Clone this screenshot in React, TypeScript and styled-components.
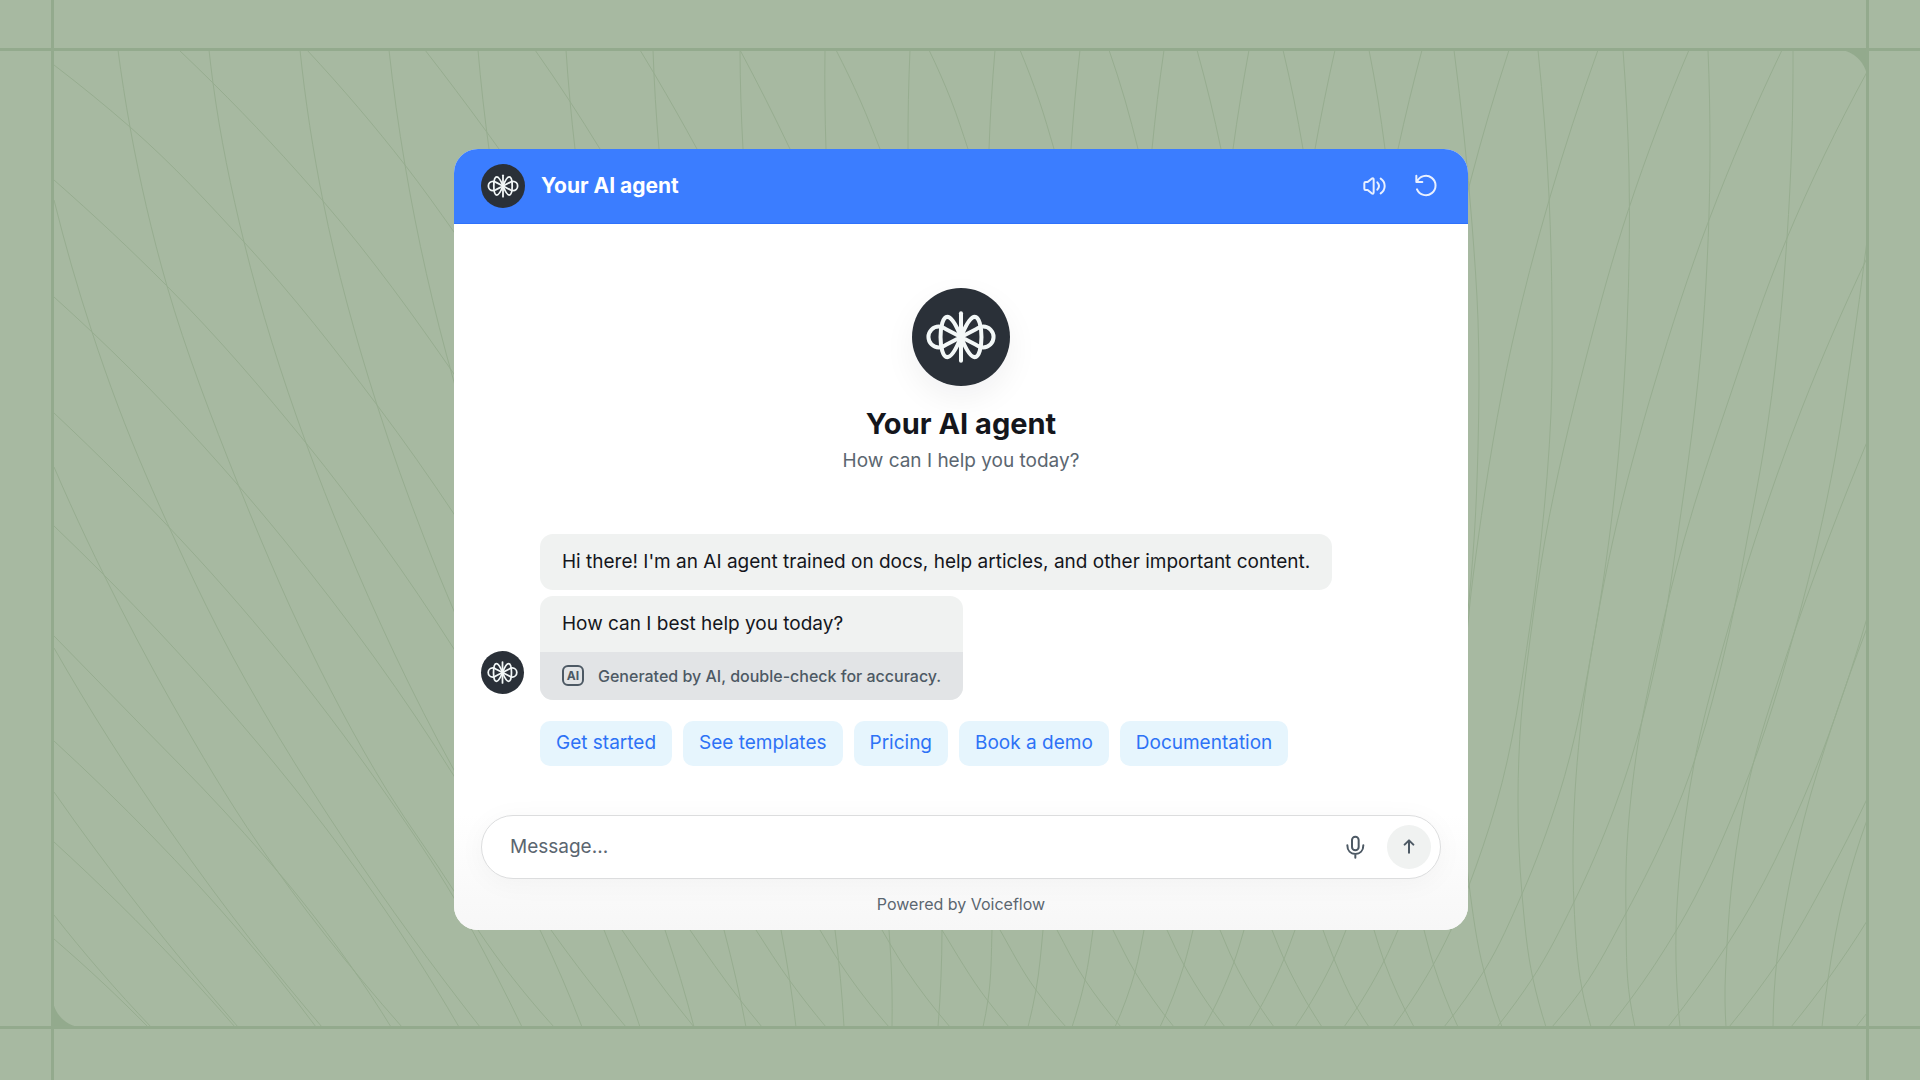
import React, { useState } from "react";
import styled, { createGlobalStyle, css } from "styled-components";

const color = {
  page: "#a7b9a1",
  guide: "#93aa8d",
  curve: "#97ad90",
  blue: "#3b7dff",
  blueEdge: "#2f72fb",
  link: "#2d72f6",
  chip: "#e6f5fd",
  ink: "#14161c",
  muted: "#5b6670",
  slate: "#4d5964",
  bubble: "#f0f2f1",
  notice: "#e2e4e6",
  dark: "#2a3038",
};

type Point = [number, number];

/* Each curve is a list of points ordered from top to bottom. */
const sweepingCurves: Point[][] = [
  [[54, 939], [103, 983], [148, 1027]],
  [[54, 842], [180, 966], [235, 1027]],
  [[54, 741], [239, 931], [316, 1027]],
  [[54, 636], [135, 719], [224, 811], [302, 901], [391, 1027]],
  [[54, 526], [104, 575], [218, 697], [359, 873], [459, 1027]],
  [[54, 413], [181, 540], [388, 797], [454, 898], [472, 930], [522, 1027]],
  [[54, 297], [92, 332], [237, 484], [284, 540], [454, 776], [540, 930], [582, 1027]],
  [[54, 180], [167, 286], [306, 443], [380, 540], [454, 649], [604, 930], [640, 1027]],
  [[54, 65], [130, 127], [244, 242], [377, 405], [454, 514], [665, 930], [694, 1027]],
  [[179, 50], [213, 83], [323, 201], [454, 374], [724, 930], [746, 1027]],
  [[307, 50], [405, 165], [454, 232], [781, 930], [796, 1027]],
  [[425, 50], [486, 131], [499, 149], [835, 930], [844, 1027]],
  [[535, 50], [569, 100], [600, 149], [889, 930], [892, 990], [892, 1027]],
  [[640, 50], [655, 75], [697, 149], [942, 930], [938, 1027]],
  [[740, 50], [766, 100], [790, 149], [992, 930], [988, 1000], [983, 1027]],
  [[836, 50], [860, 100], [880, 149], [1043, 930], [1036, 990], [1028, 1027]],
  [[929, 50], [951, 100], [968, 149], [1093, 930], [1085, 980], [1072, 1027]],
  [[1020, 50], [1039, 100], [1054, 149], [1144, 930], [1135, 972], [1115, 1027]],
  [[1109, 50], [1125, 100], [1138, 149], [1193, 930], [1184, 965], [1160, 1027]],
  [[1197, 50], [1210, 100], [1221, 149], [1244, 930], [1234, 962], [1204, 1027]],
  [[1283, 50], [1294, 100], [1303, 149], [1295, 930], [1284, 959], [1249, 1027]],
  [[1369, 50], [1378, 100], [1385, 149], [1346, 930], [1334, 959], [1295, 1027]],
  [[1454, 50], [1472, 224], [1478, 320], [1478, 448], [1474, 540], [1467, 619], [1398, 930], [1384, 961], [1344, 1027]],
  [[1538, 50], [1549, 196], [1552, 310], [1551, 413], [1541, 540], [1530, 626], [1496, 805], [1468, 888], [1451, 930], [1393, 1027]],
  [[1623, 50], [1629, 172], [1627, 327], [1609, 540], [1596, 626], [1558, 798], [1522, 894], [1484, 971], [1444, 1027]],
  [[1708, 50], [1710, 148], [1703, 327], [1677, 540], [1664, 623], [1614, 809], [1573, 904], [1532, 979], [1497, 1027]],
  [[1793, 50], [1787, 238], [1764, 448], [1747, 540], [1729, 633], [1674, 815], [1625, 915], [1582, 989], [1552, 1027]],
  [[1867, 241], [1851, 358], [1835, 458], [1818, 540], [1798, 619], [1741, 795], [1676, 931], [1630, 1000], [1609, 1027]],
  [[1867, 618], [1843, 694], [1812, 778], [1727, 945], [1668, 1027]],
  [[1867, 799], [1827, 878], [1780, 959], [1729, 1027]],
  [[1867, 921], [1828, 979], [1791, 1027]],
  [[1867, 1013], [1856, 1027]],
];

const steepCurves: Point[][] = [
  [[54, 915], [101, 972], [151, 1027]],
  [[54, 792], [143, 912], [238, 1027]],
  [[54, 648], [171, 832], [253, 943], [322, 1027]],
  [[54, 467], [87, 540], [104, 575], [173, 705], [259, 845], [402, 1027]],
  [[54, 200], [92, 332], [118, 406], [175, 540], [218, 629], [347, 844], [480, 1027]],
  [[118, 50], [130, 127], [167, 286], [238, 484], [261, 540], [300, 628], [388, 792], [454, 891], [478, 930], [554, 1027]],
  [[209, 50], [213, 83], [244, 242], [306, 443], [344, 540], [454, 770], [551, 930], [626, 1027]],
  [[300, 50], [323, 201], [377, 405], [425, 540], [454, 611], [622, 930], [640, 956], [694, 1027]],
  [[389, 50], [405, 165], [454, 382], [690, 930], [741, 1001], [762, 1027]],
  [[478, 50], [489, 149], [756, 930], [790, 981], [826, 1027]],
  [[566, 50], [575, 149], [820, 930], [840, 963], [889, 1027]],
  [[653, 50], [659, 149], [882, 930], [905, 968], [950, 1027]],
  [[740, 50], [743, 149], [942, 930], [988, 1001], [1009, 1027]],
  [[825, 50], [826, 149], [1000, 930], [1036, 990], [1066, 1027]],
  [[910, 50], [908, 149], [1057, 930], [1085, 980], [1121, 1027]],
  [[995, 50], [989, 149], [1113, 930], [1135, 972], [1174, 1027]],
  [[1080, 50], [1071, 149], [1167, 930], [1184, 965], [1225, 1027]],
  [[1164, 50], [1152, 149], [1220, 930], [1234, 962], [1274, 1027]],
  [[1249, 50], [1233, 149], [1272, 930], [1284, 959], [1322, 1027]],
  [[1335, 50], [1315, 149], [1323, 930], [1334, 959], [1357, 1008], [1369, 1027]],
  [[1422, 50], [1398, 149], [1374, 930], [1384, 961], [1414, 1027]],
  [[1509, 50], [1471, 179], [1424, 930], [1434, 966], [1458, 1027]],
  [[1598, 50], [1550, 197], [1512, 344], [1478, 540], [1469, 612], [1469, 884], [1484, 971], [1502, 1027]],
  [[1689, 50], [1629, 208], [1586, 358], [1545, 540], [1530, 640], [1521, 720], [1518, 798], [1522, 894], [1533, 979], [1546, 1027]],
  [[1782, 50], [1709, 220], [1655, 382], [1613, 540], [1596, 626], [1580, 733], [1573, 850], [1574, 904], [1582, 989], [1591, 1027]],
  [[1867, 72], [1787, 238], [1729, 399], [1684, 540], [1659, 640], [1636, 757], [1626, 871], [1626, 915], [1630, 1000], [1635, 1027]],
  [[1867, 258], [1802, 408], [1755, 540], [1723, 647], [1694, 764], [1680, 867], [1676, 931], [1677, 988], [1680, 1027]],
  [[1867, 442], [1828, 540], [1786, 657], [1749, 781], [1733, 874], [1727, 945], [1725, 1001], [1726, 1027]],
  [[1867, 628], [1833, 723], [1804, 819], [1786, 902], [1777, 959], [1773, 1027]],
  [[1867, 820], [1845, 891], [1828, 979], [1822, 1027]],
];

/* Smooth path through the points, treating x as a function of y. */
function toPath(points: Point[]): string {
  const secant = (i: number) =>
    (points[i + 1][0] - points[i][0]) / (points[i + 1][1] - points[i][1]);
  const last = points.length - 1;
  if (last === 1) return `M${points[0]} L${points[1]}`;
  const slopes = points.map((_, i) => {
    if (i === 0 || i === last) return 0;
    const before = points[i][1] - points[i - 1][1];
    const after = points[i + 1][1] - points[i][1];
    return (secant(i - 1) * after + secant(i) * before) / (before + after);
  });
  slopes[0] = 2 * secant(0) - slopes[1];
  slopes[last] = 2 * secant(last - 1) - slopes[last - 1];
  let path = `M${points[0]}`;
  for (let i = 0; i < last; i++) {
    const [x0, y0] = points[i];
    const [x1, y1] = points[i + 1];
    const third = (y1 - y0) / 3;
    path += ` C${x0 + slopes[i] * third},${y0 + third} ${x1 - slopes[i + 1] * third},${y1 - third} ${x1},${y1}`;
  }
  return path;
}

const GlobalStyle = createGlobalStyle`
  *, *::before, *::after { box-sizing: border-box; }
  body {
    margin: 0;
    background: ${color.page};
    color: ${color.ink};
    font-family: Inter, "Liberation Sans", sans-serif;
    font-size: 19px;
    line-height: 24px;
  }
  button, input { font: inherit; color: inherit; }
  h1, h2, p, ul { margin: 0; padding: 0; }
`;

const Page = styled.div`
  position: relative;
  display: flex;
  align-items: center;
  justify-content: center;
  min-height: 100vh;
  padding: 64px 64px 66px 66px;
  overflow: hidden;
`;

const Backdrop = styled.div`
  position: absolute;
  inset: 0;
`;

const Curves = styled.svg`
  display: block;
  width: 100%;
  height: 100%;
  fill: none;
  stroke: ${color.curve};
  stroke-width: 1;

  path { vector-effect: non-scaling-stroke; }
`;

const Guide = styled.div<{ $edge: "top" | "bottom" | "left" | "right" }>`
  position: absolute;
  background: ${color.guide};
  ${({ $edge }) =>
    $edge === "top" || $edge === "bottom"
      ? css`left: 0; right: 0; height: 3px;`
      : css`top: 0; bottom: 0; width: 3px;`}
  ${({ $edge }) => $edge}: ${({ $edge }) =>
    ({ top: 48, bottom: 51, left: 51, right: 51 })[$edge]}px;
`;

const Corner = styled.div<{ $at: "topRight" | "bottomLeft" }>`
  position: absolute;
  width: 32px;
  height: 32px;
  ${({ $at }) =>
    $at === "topRight"
      ? css`
          top: 49px;
          right: 52px;
          background: radial-gradient(circle at 0 100%, transparent 31px, ${color.guide} 32px);
        `
      : css`
          bottom: 52px;
          left: 52px;
          background: radial-gradient(circle at 100% 0, transparent 31px, ${color.guide} 32px);
        `}
`;

const Card = styled.main`
  position: relative;
  display: flex;
  flex-direction: column;
  width: 100%;
  max-width: 1014px;
  overflow: hidden;
  border-radius: 24px;
  background: #fff;
`;

const Header = styled.header`
  display: flex;
  align-items: center;
  gap: 16px;
  height: 75px;
  padding: 0 27px;
  background: ${color.blue};
  border-bottom: 1px solid ${color.blueEdge};
  color: #fff;
`;

const HeaderTitle = styled.h2`
  flex: 1;
  font-size: 21px;
  line-height: 28px;
  font-weight: 700;
`;

const HeaderActions = styled.div`
  display: flex;
  gap: 8px;
`;

const IconButton = styled.button`
  display: grid;
  place-items: center;
  width: 44px;
  height: 44px;
  padding: 0;
  border: 0;
  background: none;
  cursor: pointer;

  svg {
    fill: none;
    stroke: currentColor;
    stroke-width: 6;
    stroke-linecap: round;
    stroke-linejoin: round;
  }
`;

const HeaderButton = styled(IconButton)`
  color: #e9f0ff;

  &:last-child { margin-right: -7px; }
`;

const AvatarDisc = styled.span<{ $size: number }>`
  display: block;
  flex: none;
  width: ${({ $size }) => $size}px;
  height: ${({ $size }) => $size}px;
  border-radius: 50%;
  background: ${color.dark};

  svg {
    display: block;
    width: 100%;
    height: 100%;
    fill: none;
    stroke: #f3f8f8;
    stroke-width: 12;
    stroke-linecap: round;
    stroke-linejoin: round;
  }
`;

const HeroAvatar = styled.div`
  border-radius: 50%;
  box-shadow: 0 12px 32px rgba(20, 24, 30, 0.06);
`;

const Intro = styled.section`
  display: flex;
  flex-direction: column;
  align-items: center;
  padding: 64px 27px 59px;
  text-align: center;
`;

const IntroTitle = styled.h1`
  margin-top: 18px;
  font-size: 29px;
  line-height: 40px;
  font-weight: 700;
`;

const IntroText = styled.p`
  margin-top: 3px;
  color: ${color.muted};
  line-height: 28px;
`;

const Conversation = styled.section`
  display: flex;
  align-items: flex-end;
  gap: 16px;
  padding: 0 27px;
`;

const AgentMark = styled.div`
  margin-bottom: 6px;
`;

const Messages = styled.div`
  display: flex;
  flex-direction: column;
  align-items: flex-start;
  gap: 6px;
`;

const Bubble = styled.div`
  overflow: hidden;
  border-radius: 13px;
  background: ${color.bubble};
`;

const BubbleText = styled.p`
  padding: 16px 22px;
`;

const Notice = styled.div`
  display: flex;
  align-items: center;
  gap: 14px;
  height: 48px;
  padding: 0 22px;
  background: ${color.notice};
  color: ${color.slate};
  font-size: 16px;
  font-weight: 500;
`;

const AiBadge = styled.span`
  display: grid;
  place-items: center;
  width: 22px;
  height: 21px;
  border: 2px solid currentColor;
  border-radius: 6px;
  font-size: 12px;
  line-height: 16px;
  font-weight: 700;
`;

const Chips = styled.div`
  display: flex;
  flex-wrap: wrap;
  gap: 11px;
  padding: 21px 27px 49px 86px;
`;

const Chip = styled.button`
  height: 45px;
  padding: 0 16px;
  border: 0;
  border-radius: 10px;
  background: ${color.chip};
  color: ${color.link};
  cursor: pointer;
`;

const Footer = styled.footer`
  display: flex;
  flex-direction: column;
  gap: 13px;
  padding: 0 27px 14px;
  background: linear-gradient(#fff, #f7f7f7);
`;

const Composer = styled.form`
  display: flex;
  align-items: center;
  gap: 10px;
  height: 64px;
  padding: 0 9px 0 28px;
  border: 1px solid #dcddde;
  border-radius: 32px;
  background: #fff;
  box-shadow: 0 4px 28px rgba(20, 24, 30, 0.04);
`;

const MessageInput = styled.input`
  flex: 1;
  min-width: 0;
  height: 40px;
  padding: 0;
  border: 0;
  outline: 0;
  background: none;

  &::placeholder {
    color: ${color.muted};
    opacity: 1;
  }
`;

const ComposerButton = styled(IconButton)<{ $filled?: boolean }>`
  color: ${color.slate};
  border-radius: 50%;
  background: ${({ $filled }) => ($filled ? color.bubble : "none")};
`;

const Powered = styled.p`
  color: ${color.muted};
  font-size: 16px;
  text-align: center;
`;

function Avatar({ size }: { size: number }) {
  const wing = (
    <>
      <path d="M0 0C-12-30-26-60-41-60C-54-60-61-30-61 0C-61 30-54 60-41 60C-26 60-12 30 0 0" />
      <path d="M0 0L-46-24Q-56-31-66-31A31 31 0 0 0-66 31Q-56 31-46 24L0 0" />
    </>
  );
  return (
    <AvatarDisc $size={size}>
      <svg viewBox="-146 -146 292 292" aria-hidden="true">
        {wing}
        <g transform="scale(-1 1)">{wing}</g>
        <path d="M0-71V71" />
      </svg>
    </AvatarDisc>
  );
}

const SpeakerIcon = () => (
  <svg width="23" height="18" viewBox="0 0 69 54" aria-hidden="true">
    <path d="M4 19Q4 15 8 15H14L26 5Q32 2 32 8V46Q32 52 26 49L14 39H8Q4 39 4 35ZM43 16Q53 27 43 38M53 5C69 16 69 38 53 49" />
  </svg>
);

const RestartIcon = () => (
  <svg width="23" height="23" viewBox="0 0 69 69" aria-hidden="true">
    <path d="M4 5V24H22M6 23A29 29 0 1 1 6 46" />
  </svg>
);

const MicIcon = () => (
  <svg width="19" height="24" viewBox="0 0 57 72" aria-hidden="true">
    <rect x="18" y="5" width="20" height="41" rx="10" />
    <path d="M4 31C4 47 14 57 28 57S52 47 52 31M28 57V68" />
  </svg>
);

const ArrowUpIcon = () => (
  <svg width="12" height="15" viewBox="0 0 36 45" aria-hidden="true">
    <path d="M18 41V5M5 17L18 4L31 17" />
  </svg>
);

const suggestions = ["Get started", "See templates", "Pricing", "Book a demo", "Documentation"];

export default function App() {
  const [draft, setDraft] = useState("");

  return (
    <>
      <GlobalStyle />
      <Page>
        <Backdrop aria-hidden="true">
          <Curves viewBox="0 0 1920 1080" preserveAspectRatio="none">
            {[...sweepingCurves, ...steepCurves].map((points, i) => (
              <path key={i} d={toPath(points)} />
            ))}
          </Curves>
          <Guide $edge="top" />
          <Guide $edge="bottom" />
          <Guide $edge="left" />
          <Guide $edge="right" />
          <Corner $at="topRight" />
          <Corner $at="bottomLeft" />
        </Backdrop>

        <Card>
          <Header>
            <Avatar size={44} />
            <HeaderTitle>Your AI agent</HeaderTitle>
            <HeaderActions>
              <HeaderButton type="button" aria-label="Toggle sound">
                <SpeakerIcon />
              </HeaderButton>
              <HeaderButton type="button" aria-label="Restart chat">
                <RestartIcon />
              </HeaderButton>
            </HeaderActions>
          </Header>

          <Intro>
            <HeroAvatar>
              <Avatar size={98} />
            </HeroAvatar>
            <IntroTitle>Your AI agent</IntroTitle>
            <IntroText>How can I help you today?</IntroText>
          </Intro>

          <Conversation>
            <AgentMark>
              <Avatar size={43} />
            </AgentMark>
            <Messages>
              <Bubble>
                <BubbleText>
                  Hi there! I'm an AI agent trained on docs, help articles, and other important content.
                </BubbleText>
              </Bubble>
              <Bubble>
                <BubbleText>How can I best help you today?</BubbleText>
                <Notice>
                  <AiBadge>AI</AiBadge>
                  <span>Generated by AI, double-check for accuracy.</span>
                </Notice>
              </Bubble>
            </Messages>
          </Conversation>

          <Chips>
            {suggestions.map((label) => (
              <Chip key={label} type="button">
                {label}
              </Chip>
            ))}
          </Chips>

          <Footer>
            <Composer onSubmit={(event) => event.preventDefault()}>
              <MessageInput
                aria-label="Message"
                placeholder="Message..."
                value={draft}
                onChange={(event) => setDraft(event.target.value)}
              />
              <ComposerButton type="button" aria-label="Record voice message">
                <MicIcon />
              </ComposerButton>
              <ComposerButton type="submit" aria-label="Send message" $filled>
                <ArrowUpIcon />
              </ComposerButton>
            </Composer>
            <Powered>Powered by Voiceflow</Powered>
          </Footer>
        </Card>
      </Page>
    </>
  );
}
